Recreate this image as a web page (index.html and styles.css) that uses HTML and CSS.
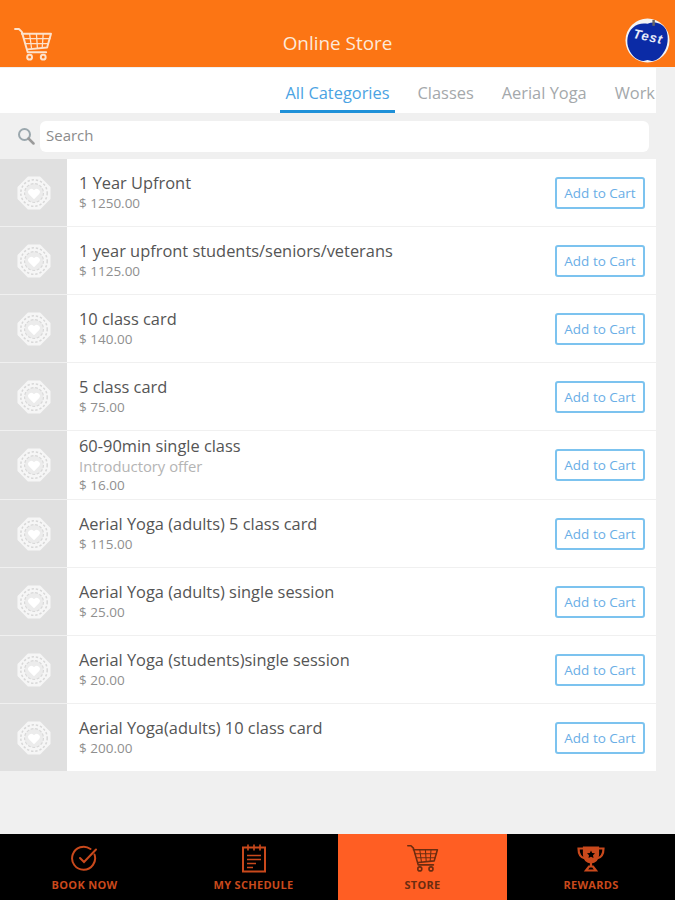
FILE: index.html
```html
<!DOCTYPE html>
<html lang="en">
<head>
  <meta charset="UTF-8" />
  <title>Online Store</title>
  <link rel="stylesheet" href="styles.css">
</head>
<body>
  <svg class="defs" width="0" height="0">
    <symbol id="emblem" viewBox="0 0 36 36">
      <path d="M12 1.500h12L34.500 12v12L24 34.500H12L1.500 24V12z" fill="#f6f6f6" stroke="#f6f6f6" stroke-linejoin="round" stroke-width="2"/>
      <circle cx="18" cy="18" r="14" fill="none" stroke="#d8d8d8" stroke-width="1.600" stroke-dasharray="2.500 2"/>
      <circle cx="18" cy="18" r="10" fill="#ececec" stroke="#d8d8d8" stroke-width="1.200" stroke-dasharray="3 1.800"/>
      <path d="M18 24.500l-5.500-5.500a3.300 3.300 0 0 1 5.500-4 3.300 3.300 0 0 1 5.500 4z" fill="#fff"/>
    </symbol>
    <symbol id="cart" viewBox="0 0 40 36">
      <g fill="none" stroke="currentColor" stroke-linecap="round" stroke-linejoin="round">
        <path stroke-width="2" d="M1 2h4l3 3 6 21h19"/>
        <path stroke-width="2" d="M8 7h30l-4 14-20 2"/>
        <path stroke-width="1.300" d="M16 7l2 15M23 7l1 14.500M30 7l-1 14M10 12h27M12 17h23"/>
        <circle stroke-width="2" cx="16" cy="31" r="2.500"/>
        <circle stroke-width="2" cx="30" cy="31" r="2.500"/>
      </g>
    </symbol>
  </svg>

  <header class="topbar">
    <svg class="topbar-cart"><use href="#cart"/></svg>
    <h1 class="topbar-title">Online Store</h1>
    <div class="avatar">
      <svg viewBox="0 0 46 46" width="45" height="45">
        <circle cx="23" cy="23" r="22.500" fill="#f4f4f4"/>
        <path d="M23 6c7-3 15-1 19 6 3 7 2 18-3 24-3 5-8 8-12 8l-4-1-4 1C13 44 7 39 4 32 1 25 2 15 8 10c4-4 10-5 15-4z" fill="#0b2ba6"/>
        <rect x="28" y="2" width="2.500" height="6" fill="#666"/>
      </svg>
      <span class="avatar-text">Test</span>
    </div>
  </header>

  <nav class="tabs">
    <a class="tab active">All Categories</a>
    <a class="tab">Classes</a>
    <a class="tab">Aerial Yoga</a>
    <a class="tab">Work</a>
  </nav>

  <div class="search">
    <svg class="search-icon" viewBox="0 0 18 18" width="18" height="18">
      <circle cx="7.500" cy="7.500" r="5.500" fill="none" stroke="#9aa7ad" stroke-width="2"/>
      <path d="M11.500 11.500l5 5" stroke="#9a9a9a" stroke-width="2.500" stroke-linecap="round"/>
    </svg>
    <div class="search-box">Search</div>
  </div>

  <main class="list">
    <div class="item">
      <div class="thumb"><svg><use href="#emblem"/></svg></div>
      <div class="info"><div class="name">1 Year Upfront</div><div class="price">$ 1250.00</div></div>
      <button class="add">Add to Cart</button>
    </div>
    <div class="item">
      <div class="thumb"><svg><use href="#emblem"/></svg></div>
      <div class="info"><div class="name">1 year upfront students/seniors/veterans</div><div class="price">$ 1125.00</div></div>
      <button class="add">Add to Cart</button>
    </div>
    <div class="item">
      <div class="thumb"><svg><use href="#emblem"/></svg></div>
      <div class="info"><div class="name">10 class card</div><div class="price">$ 140.00</div></div>
      <button class="add">Add to Cart</button>
    </div>
    <div class="item">
      <div class="thumb"><svg><use href="#emblem"/></svg></div>
      <div class="info"><div class="name">5 class card</div><div class="price">$ 75.00</div></div>
      <button class="add">Add to Cart</button>
    </div>
    <div class="item tall">
      <div class="thumb"><svg><use href="#emblem"/></svg></div>
      <div class="info"><div class="name">60-90min single class</div><div class="note">Introductory offer</div><div class="price">$ 16.00</div></div>
      <button class="add">Add to Cart</button>
    </div>
    <div class="item">
      <div class="thumb"><svg><use href="#emblem"/></svg></div>
      <div class="info"><div class="name">Aerial Yoga (adults) 5 class card</div><div class="price">$ 115.00</div></div>
      <button class="add">Add to Cart</button>
    </div>
    <div class="item">
      <div class="thumb"><svg><use href="#emblem"/></svg></div>
      <div class="info"><div class="name">Aerial Yoga (adults) single session</div><div class="price">$ 25.00</div></div>
      <button class="add">Add to Cart</button>
    </div>
    <div class="item">
      <div class="thumb"><svg><use href="#emblem"/></svg></div>
      <div class="info"><div class="name">Aerial Yoga (students)single session</div><div class="price">$ 20.00</div></div>
      <button class="add">Add to Cart</button>
    </div>
    <div class="item">
      <div class="thumb"><svg><use href="#emblem"/></svg></div>
      <div class="info"><div class="name">Aerial Yoga(adults) 10 class card</div><div class="price">$ 200.00</div></div>
      <button class="add">Add to Cart</button>
    </div>
  </main>

  <footer class="bottombar">
    <a class="nav-item">
      <svg viewBox="0 0 28 28" width="28" height="28" fill="none" stroke="currentColor" stroke-width="2" stroke-linecap="round">
        <path d="M23.500 10a11.500 11.500 0 1 1-4-5.500"/>
        <path d="M9 13.500l4 4L25 5"/>
      </svg>
      <span>BOOK NOW</span>
    </a>
    <a class="nav-item">
      <svg viewBox="0 0 24 28" width="24" height="28" fill="none" stroke="currentColor" stroke-width="2">
        <rect x="1" y="3" width="22" height="24"/>
        <path d="M6 0v6M12 0v6M18 0v6M5 11h14M5 15h14M5 19h9M5 23h6" stroke-width="1.600"/>
      </svg>
      <span>MY SCHEDULE</span>
    </a>
    <a class="nav-item current">
      <svg width="32" height="29"><use href="#cart"/></svg>
      <span>STORE</span>
    </a>
    <a class="nav-item">
      <svg viewBox="0 0 28 26" width="28" height="26" fill="none" stroke="currentColor" stroke-width="2.200">
        <path d="M7 2h14v7c0 5-3 8-7 8s-7-3-7-8z" fill="currentColor"/>
        <path d="M7 3H1.500c0 6 2 9 6.500 10M21 3h5.500c0 6-2 9-6.500 10M14 17v4M9 25l3-4h4l3 4z"/>
        <path d="M14 5l1.200 2.500 2.800.3-2 2 .5 2.700-2.500-1.300-2.500 1.300.5-2.700-2-2 2.800-.3z" fill="#000" stroke="none"/>
      </svg>
      <span>REWARDS</span>
    </a>
  </footer>
</body>
</html>
```

FILE: styles.css
```css
body {
  margin: 0;
  height: 900px;
  overflow: hidden;
  position: relative;
  background: #f0f0f0;
  font-family: "Open Sans", sans-serif;
}

.defs {
  position: absolute;
}

/* Top bar */
.topbar {
  height: 67px;
  box-sizing: border-box;
  background: #fc7514;
  display: flex;
  justify-content: space-between;
  align-items: flex-end;
  padding: 0 5px 4px 14px;
  position: relative;
  margin-bottom: 1px;
}

.topbar-cart {
  width: 39px;
  height: 35px;
  color: #fde2cc;
  margin-bottom: 1px;
}

.topbar-title {
  position: absolute;
  left: 0;
  right: 0;
  top: 30px;
  margin: 0;
  text-align: center;
  font-size: 18.900px;
  line-height: 26px;
  font-weight: 400;
  color: #fde9da;
}

.avatar {
  width: 45px;
  height: 45px;
  position: relative;
}

.avatar-text {
  position: absolute;
  left: 8px;
  top: 11px;
  font-family: "Liberation Sans", sans-serif;
  font-size: 13px;
  font-weight: bold;
  font-style: italic;
  letter-spacing: 1px;
  color: #e8ecf8;
  transform: rotate(12deg);
}

/* Tabs */
.tabs {
  width: 656px;
  height: 45px;
  background: #fff;
  display: flex;
  gap: 17px;
  padding-left: 280px;
  box-sizing: border-box;
  overflow: hidden;
}

.tab {
  flex: none;
  padding: 13px 5.500px 0;
  font-size: 16.400px;
  line-height: 24px;
  color: #a4a8ab;
  box-sizing: border-box;
  height: 45px;
}

.tab.active {
  color: #4ba3e3;
  border-bottom: 3px solid #1e90d8;
}

/* Search */
.search {
  height: 46px;
  display: flex;
  align-items: center;
  padding: 0 26px 0 17px;
  gap: 5px;
}

.search-icon {
  flex: none;
}

.search-box {
  flex: 1;
  height: 31px;
  margin-top: 1px;
  background: #fff;
  border-radius: 6px;
  padding-left: 6px;
  font-size: 15px;
  line-height: 29px;
  color: #8c8c8c;
}

/* Product list */
.list {
  width: 656px;
}

.item {
  height: 67px;
  margin-bottom: 1px;
  background: #fff;
  display: flex;
  align-items: center;
}

.item.tall {
  height: 68px;
}

.thumb {
  width: 67px;
  height: 100%;
  background: #e0e0e0;
  display: flex;
  align-items: center;
  justify-content: center;
  margin-right: 12px;
}

.thumb svg {
  width: 34px;
  height: 34px;
}

.info {
  flex: 1;
}

.name {
  font-size: 16.400px;
  line-height: 22px;
  color: #555;
}

.note {
  font-size: 14.800px;
  line-height: 19px;
  color: #b4b4b4;
}

.price {
  font-size: 13.500px;
  line-height: 19px;
  color: #8f8f8f;
}

.add {
  width: 90px;
  height: 32px;
  margin-right: 11px;
  padding: 0;
  background: #fff;
  border: 2px solid #7cc3ef;
  border-radius: 3px;
  font-family: inherit;
  font-size: 13.500px;
  color: #6aaee6;
}

/* Bottom bar */
.bottombar {
  position: absolute;
  left: 0;
  right: 0;
  bottom: 0;
  height: 66px;
  background: #000;
  display: grid;
  grid-template-columns: 169px 169px 169px 168px;
}

.nav-item {
  display: flex;
  flex-direction: column;
  align-items: center;
  color: #c9491c;
  font-size: 11px;
  font-weight: 700;
  letter-spacing: 0.3px;
}

.nav-item svg {
  height: 29px;
  margin-top: 10px;
}

.nav-item span {
  margin-top: 2px;
  line-height: 20px;
}

.nav-item.current {
  background: #ff5e23;
  color: #6b2c10;
}
```
